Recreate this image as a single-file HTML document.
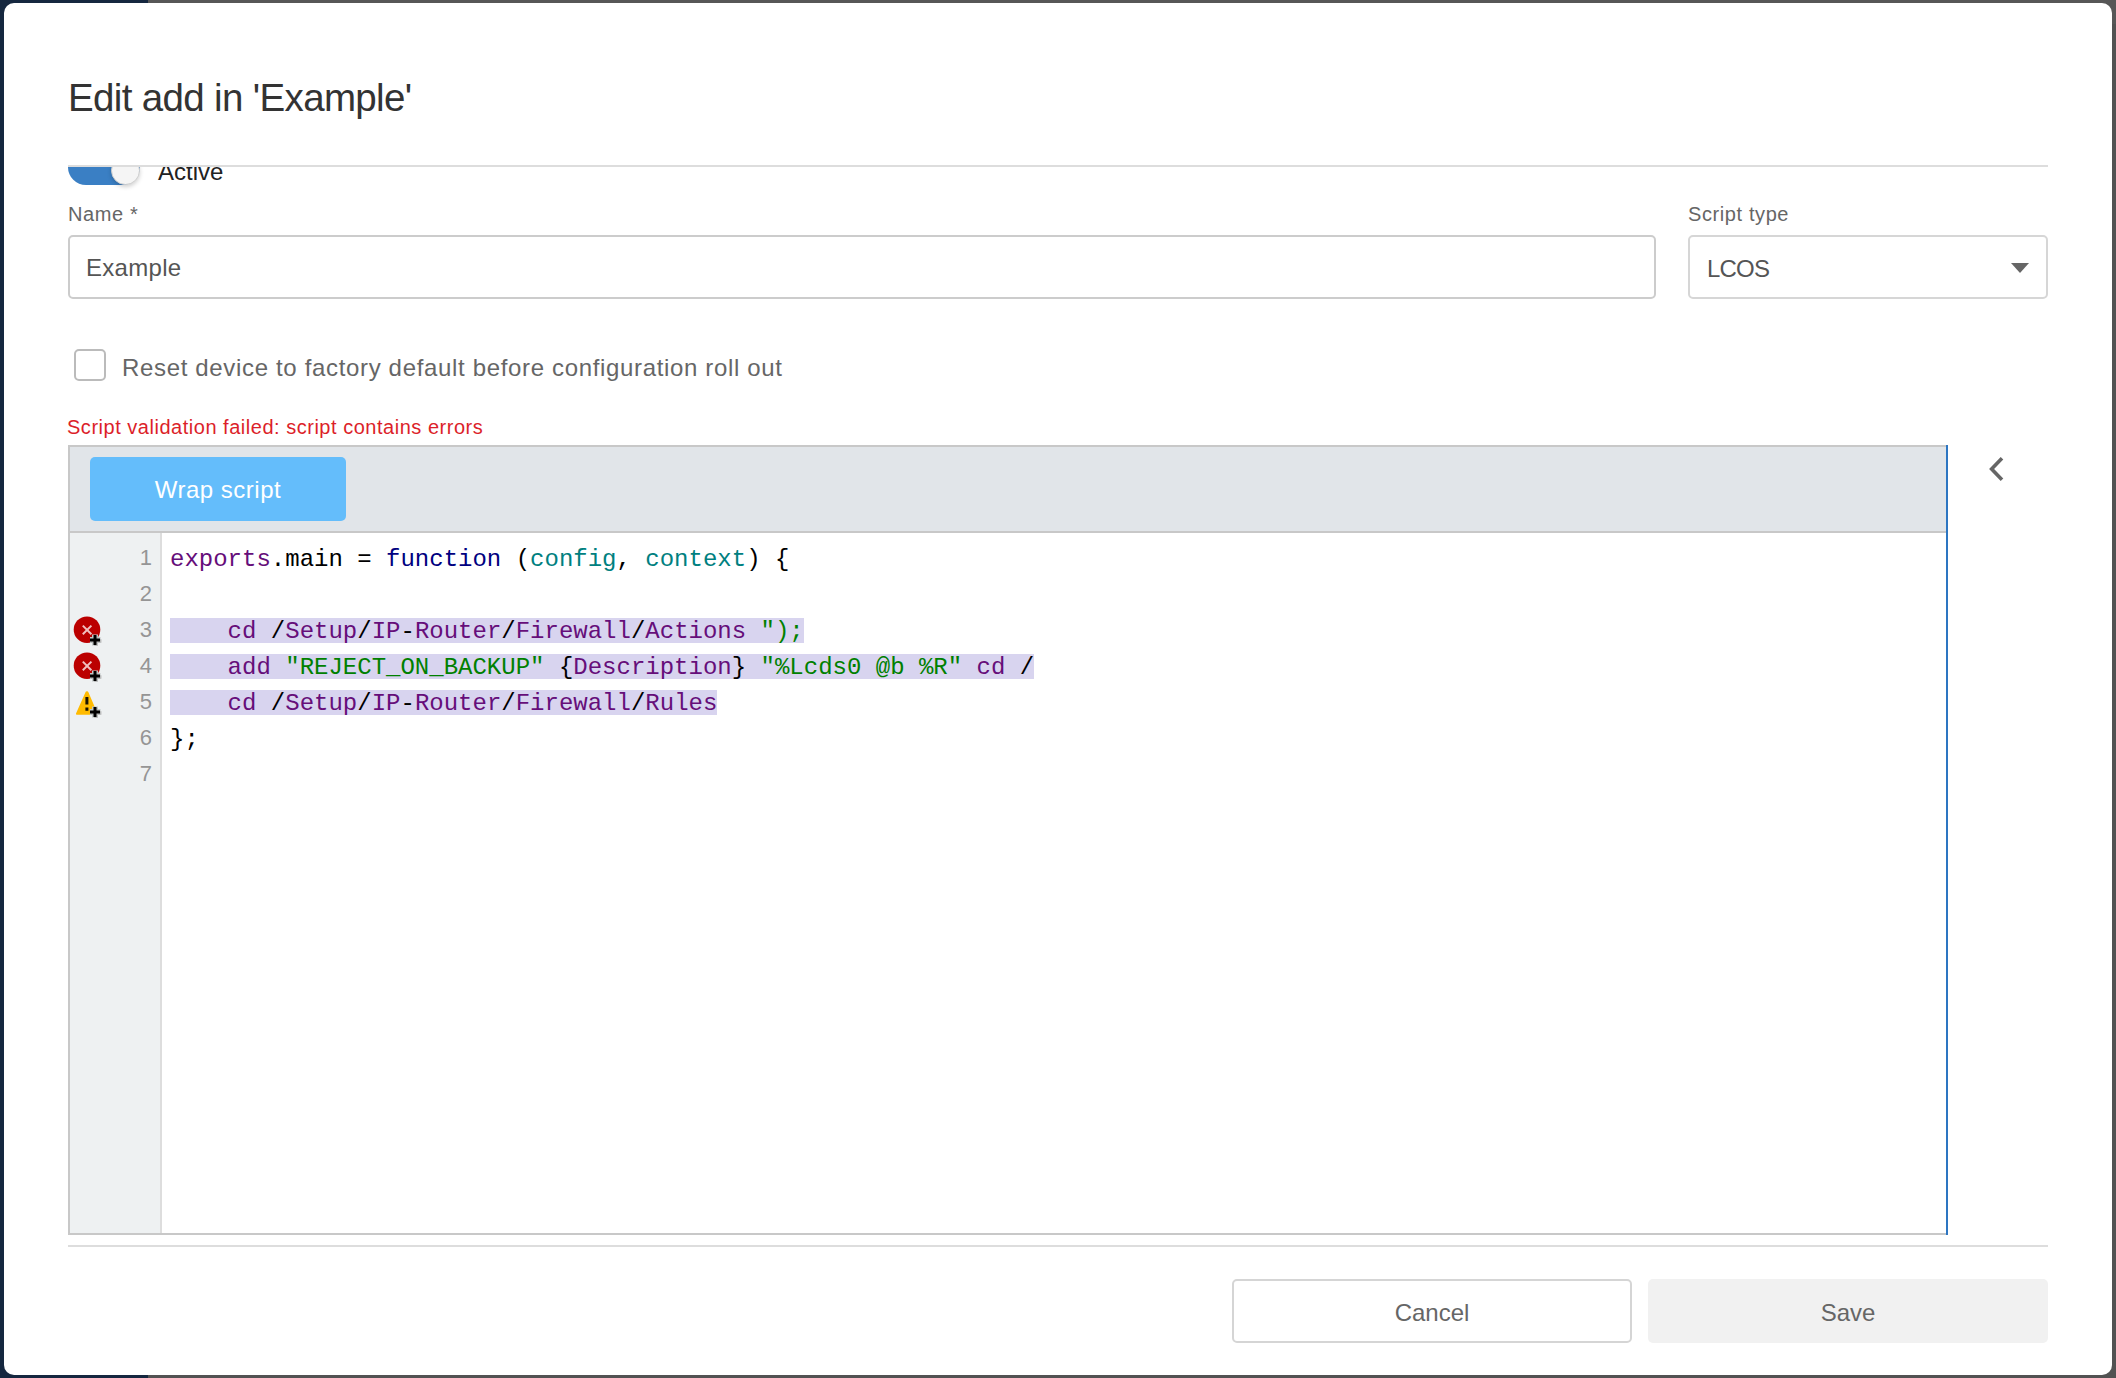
<!DOCTYPE html>
<html><head><meta charset="utf-8">
<style>
*{box-sizing:border-box;margin:0;padding:0}
html,body{width:2116px;height:1378px;overflow:hidden;background:#575757;font-family:"Liberation Sans",sans-serif}
.abs{position:absolute}
#side{left:0;top:0;width:148px;height:1378px;background:#15273f}
#modal{left:4px;top:3px;width:2108px;height:1372px;background:#fff;border-radius:10px;overflow:hidden}
#title{left:68px;top:73px;font-size:38.5px;letter-spacing:-0.65px;color:#333;white-space:nowrap;line-height:50px}
#sep1{left:68px;top:165px;width:1980px;height:2px;background:#ddd}
#scroll{left:0;top:167px;width:2116px;height:1078px;overflow:hidden}
.toggle-track{left:68px;top:149px;width:72px;height:36px;border-radius:18px;background:#3a7fc4}
.knob{left:111px;top:156px;width:29px;height:29px;border-radius:50%;background:#f5f5f5;border:1.5px solid #cfcfcf;box-shadow:0 2px 4px rgba(0,0,0,.18)}
.lbl{font-size:20px;letter-spacing:0.6px;color:#666;white-space:nowrap}
.input{border:2px solid #ccc;border-radius:5px;background:#fff}
.itext{font-size:24px;color:#555;white-space:nowrap}
.code{font-family:"Liberation Mono",monospace;font-size:24px;white-space:pre;line-height:36px}
.ln{font-family:"Liberation Sans",sans-serif;font-size:22px;color:#959595;text-align:right;width:40px;line-height:36px}
.p{color:#660e7a}.k{color:#000080}.t{color:#008080}.g{color:#008000}.b{color:#000}
.hl{background:#d8d4ef;height:25px}
.btn{border-radius:5px;font-size:24px;text-align:center;white-space:nowrap}
</style></head>
<body>
<div id="side" class="abs"></div>
<div class="abs" style="left:2100px;top:24px;width:16px;height:1354px;background:#525252"></div>
<div class="abs" style="left:148px;top:1360px;width:1968px;height:18px;background:#525252"></div>
<div id="modal" class="abs"></div>
<div class="abs" id="title">Edit add in 'Example'</div>
<div class="abs" id="sep1"></div>

<!-- clipped scroll content -->
<div class="abs" style="left:0;top:167px;width:2116px;height:30px;overflow:hidden">
  <div class="abs toggle-track" style="top:-18px"></div>
  <div class="abs knob" style="top:-11px"></div>
  <div class="abs" style="left:158px;top:-10px;font-size:24px;color:#222;line-height:30px">Active</div>
</div>

<div class="abs lbl" style="left:68px;top:203px">Name *</div>
<div class="abs input" style="left:68px;top:235px;width:1588px;height:64px"></div>
<div class="abs itext" style="left:86px;top:254px;letter-spacing:0.3px">Example</div>

<div class="abs lbl" style="left:1688px;top:203px">Script type</div>
<div class="abs input" style="left:1688px;top:235px;width:360px;height:64px;border-color:#d6d6d6"></div>
<div class="abs itext" style="left:1707px;top:255px;letter-spacing:-0.8px">LCOS</div>
<svg class="abs" style="left:2010px;top:262px" width="20" height="12"><path d="M1 1 L19 1 L10 11 Z" fill="#666"/></svg>

<div class="abs" style="left:74px;top:349px;width:32px;height:32px;border:2px solid #bbb;border-radius:5px"></div>
<div class="abs" style="left:122px;top:354px;font-size:24px;letter-spacing:0.66px;color:#666;white-space:nowrap">Reset device to factory default before configuration roll out</div>

<div class="abs" style="left:67px;top:416px;font-size:20px;letter-spacing:0.52px;color:#dc1f2a;white-space:nowrap">Script validation failed: script contains errors</div>

<!-- editor -->
<div class="abs" style="left:68px;top:445px;width:1880px;height:790px;border:2px solid #c8c8c8;border-right:none;background:#fff"></div>
<div class="abs" style="left:70px;top:447px;width:1876px;height:86px;background:#e1e5e9;border-bottom:2px solid #c8c8c8"></div>
<div class="abs btn" style="left:90px;top:457px;width:256px;height:64px;background:#64bdfb;color:#fff;line-height:66px;letter-spacing:0.5px">Wrap script</div>
<div class="abs" style="left:70px;top:533px;width:92px;height:700px;background:#eef1f2;border-right:2px solid #ddd"></div>
<div class="abs" style="left:1946px;top:445px;width:2px;height:790px;background:#2d76c2"></div>


<svg class="abs" style="left:68px;top:610px" width="40" height="40">
 <circle cx="19" cy="19.7" r="13.3" fill="#bb0000"/>
 <path d="M14.8 15.6 L23.4 24.2 M23.4 15.6 L14.8 24.2" stroke="#f0c0c0" stroke-width="2"/>
 <path d="M22 30 H32.5 M27 24.5 V35.5" stroke="#c2c8c8" stroke-width="6"/>
 <path d="M23 31 H33.5 M28 26 V36" stroke="#b0b0b0" stroke-width="3.5" opacity=".7"/>
 <path d="M22 30 H32 M27 25 V35" stroke="#000" stroke-width="3"/>
</svg>
<svg class="abs" style="left:68px;top:646px" width="40" height="40">
 <circle cx="19" cy="19.7" r="13.3" fill="#bb0000"/>
 <path d="M14.8 15.6 L23.4 24.2 M23.4 15.6 L14.8 24.2" stroke="#f0c0c0" stroke-width="2"/>
 <path d="M22 30 H32.5 M27 24.5 V35.5" stroke="#c2c8c8" stroke-width="6"/>
 <path d="M23 31 H33.5 M28 26 V36" stroke="#b0b0b0" stroke-width="3.5" opacity=".7"/>
 <path d="M22 30 H32 M27 25 V35" stroke="#000" stroke-width="3"/>
</svg>
<svg class="abs" style="left:68px;top:682px" width="40" height="40">
 <path d="M18.9 9.5 Q19.5 8.7 20.3 10 L29.5 31.5 Q29.8 32.8 28.5 32.8 L9 32.8 Q7.6 32.8 8 31.5 L17.6 10 Q18.2 8.7 18.9 9.5 Z" fill="#ffbb00"/>
 <path d="M18.9 15 V22.5 M18.9 25.5 V28.7" stroke="#1a1400" stroke-width="3"/>
 <path d="M22 30 H32.5 M27 24.5 V35.5" stroke="#c2c8c8" stroke-width="6"/>
 <path d="M23 31 H33.5 M28 26 V36" stroke="#b0b0b0" stroke-width="3.5" opacity=".7"/>
 <path d="M22 30 H32 M27 25 V35" stroke="#000" stroke-width="3"/>
</svg>
<div class="abs ln" style="left:112px;top:540px">1<br>2<br>3<br>4<br>5<br>6<br>7</div>
<div class="abs hl" style="left:170px;top:618px;width:634px"></div>
<div class="abs hl" style="left:170px;top:654px;width:864px"></div>
<div class="abs hl" style="left:170px;top:690px;width:547px"></div>
<div class="abs code" style="left:170px;top:541.5px"><span class="p">exports</span><span class="b">.main = </span><span class="k">function</span><span class="b"> (</span><span class="t">config</span><span class="b">, </span><span class="t">context</span><span class="b">) {</span>

<span class="p">    cd</span><span class="b"> /</span><span class="p">Setup</span><span class="b">/</span><span class="p">IP</span><span class="b">-</span><span class="p">Router</span><span class="b">/</span><span class="p">Firewall</span><span class="b">/</span><span class="p">Actions</span><span class="g"> ");</span>
<span class="p">    add</span><span class="b"> </span><span class="g">"REJECT_ON_BACKUP"</span><span class="b"> {</span><span class="p">Description</span><span class="b">}</span><span class="g"> "%Lcds0 @b %R"</span><span class="p"> cd</span><span class="b"> /</span>
<span class="p">    cd</span><span class="b"> /</span><span class="p">Setup</span><span class="b">/</span><span class="p">IP</span><span class="b">-</span><span class="p">Router</span><span class="b">/</span><span class="p">Firewall</span><span class="b">/</span><span class="p">Rules</span>
<span class="b">};</span>
</div>

<svg class="abs" style="left:1984px;top:455px" width="28" height="30"><path d="M18 3.2 L7.6 14 L18 24.8" stroke="#666" stroke-width="3.6" fill="none"/></svg>

<div class="abs" style="left:68px;top:1245px;width:1980px;height:2px;background:#ddd"></div>
<div class="abs btn" style="left:1232px;top:1279px;width:400px;height:64px;border:2px solid #d5d5d5;color:#666;line-height:63px;background:#fff">Cancel</div>
<div class="abs btn" style="left:1648px;top:1279px;width:400px;height:64px;background:#f1f1f1;color:#666;line-height:67px">Save</div>
</body></html>
